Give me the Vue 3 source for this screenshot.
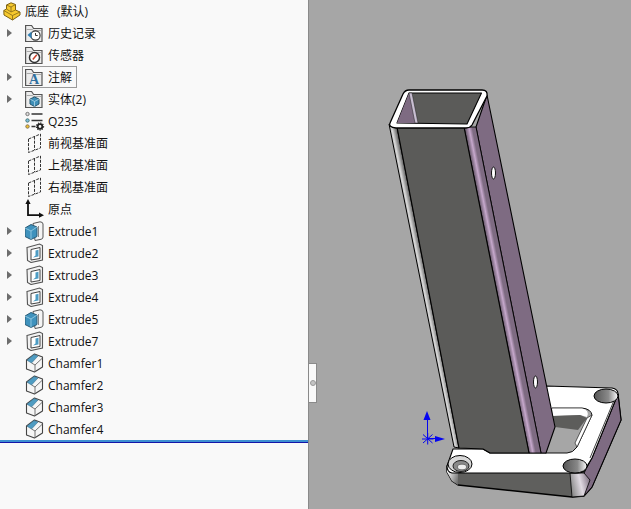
<script setup>
const rows = [
  { label: "历史记录", icon: "history", arrow: true },
  { label: "传感器", icon: "sensor" },
  { label: "注解", icon: "note", arrow: true, selected: true },
  { label: "实体(2)", icon: "solid", arrow: true },
  { label: "Q235", icon: "material" },
  { label: "前视基准面", icon: "plane" },
  { label: "上视基准面", icon: "plane" },
  { label: "右视基准面", icon: "plane" },
  { label: "原点", icon: "origin" },
  { label: "Extrude1", icon: "boss", arrow: true },
  { label: "Extrude2", icon: "cut", arrow: true },
  { label: "Extrude3", icon: "cut", arrow: true },
  { label: "Extrude4", icon: "cut", arrow: true },
  { label: "Extrude5", icon: "boss", arrow: true },
  { label: "Extrude7", icon: "cut", arrow: true },
  { label: "Chamfer1", icon: "chamfer" },
  { label: "Chamfer2", icon: "chamfer" },
  { label: "Chamfer3", icon: "chamfer" },
  { label: "Chamfer4", icon: "chamfer" },
];
const folders = ["history", "sensor", "note", "solid"];
</script>

<template>
  <div class="app">
    <aside class="tree">
      <div class="row root">
        <svg class="root-icon" width="18" height="19" viewBox="0 0 18 19">
          <path d="M.8 8.5 L3.5 7 V3 L8 .8 L12.5 2.5 V8 L17 10 V13 L9.5 18 L1 13Z" fill="#f6c92e" stroke="#7d6214" stroke-width="1" stroke-linejoin="round" />
          <path d="M3.5 3 L8 5 L12.5 2.5 M8 5 V10 L12.5 8 M8 10 L3.5 7 M.8 8.5 L9.5 13.5 L17 10 M9.5 13.5 V18" fill="none" stroke="#8f7118" stroke-width=".9" />
        </svg>
        <span class="label">底座</span>
        <span class="label config">(默认)</span>
      </div>

      <div v-for="row in rows" :key="row.label" class="row">
        <span class="arrow-cell"><i v-if="row.arrow" class="arrow"></i></span>
        <span class="item" :class="{ selected: row.selected }">
          <svg class="icon" width="20" height="20" viewBox="0 0 20 20">
            <g v-if="folders.includes(row.icon)">
              <path d="M.6 18.5 V2.5 H6.6 L8.6 5.5 H17 V18.5Z" fill="#ececec" stroke="#555" stroke-width="1.2" />
              <path d="M1.6 6.5 H7.6 L8.1 7.5 H16" fill="none" stroke="#aaa" />
            </g>
            <g v-if="row.icon === 'history'">
              <circle cx="10.5" cy="12.5" r="4.6" fill="#fff" stroke="#333" stroke-width="1.1" />
              <path d="M10.5 10 V12.5 H12.7" fill="none" stroke="#333" />
              <path d="M2.5 12 L6.5 8.5 V15.5Z" fill="#2f7fb5" />
            </g>
            <g v-if="row.icon === 'sensor'">
              <circle cx="9.5" cy="12.5" r="5" fill="#fff" stroke="#333" stroke-width="1.5" />
              <path d="M7.8 14.5 L11.8 9.8" stroke="#c8402a" stroke-width="1.5" />
            </g>
            <text v-if="row.icon === 'note'" x="9" y="17" class="note-a">A</text>
            <g v-if="row.icon === 'solid'">
              <path d="M9.5 8 L14 10 V15 L9.5 17.5 L5 15 V10Z" fill="#3f8fb8" stroke="#25566f" />
              <path d="M5 10 L9.5 12.5 L14 10 M9.5 12.5 V17.5" fill="none" stroke="#bfe0ee" stroke-width=".7" />
            </g>
            <g v-if="row.icon === 'material'">
              <circle cx="2.5" cy="3" r="1.7" fill="#ddd" stroke="#777" />
              <circle cx="2.5" cy="9.5" r="1.7" fill="#7fc0e0" stroke="#477" />
              <circle cx="2.5" cy="15.5" r="1.7" fill="#f0c030" stroke="#875" />
              <path d="M6.5 3 H17.5 M6.5 9.5 H17.5 M6.5 15.5 H10.5" stroke="#333" stroke-width="1.6" />
              <circle cx="15" cy="15.5" r="2.3" fill="none" stroke="#222" stroke-width="1.8" />
              <circle cx="15" cy="15.5" r="3.6" fill="none" stroke="#222" stroke-width="1.1" stroke-dasharray="1.2 1.2" />
            </g>
            <path v-if="row.icon === 'plane'" d="M3.5 6 L15.5 1 V15 L3.5 19.5Z M9.5 3.5 V17" fill="none" stroke="#333" stroke-dasharray="3 1.2" />
            <g v-if="row.icon === 'origin'">
              <path d="M3 3 V16.2 H15" fill="none" stroke="#111" stroke-width="1.8" />
              <path d="M3 0 L.4 5 H5.6Z M19 16.2 L14 13.6 V18.8Z" fill="#111" />
            </g>
            <g v-if="row.icon === 'boss'">
              <path d="M8 2.5 L15 .8 Q18 1 18 3 V16 Q18 18 16 18.3 L10 19.5Z" fill="#f4f4f4" stroke="#555" />
              <path d="M13.5 5 V16" stroke="#888" />
              <path d="M0 7 L6 3.5 L12 6 V15.5 L6 18.5 L0 15.5Z" fill="#3f92bd" stroke="#2a5a75" />
              <path d="M0 7 L6 10 L12 6 M6 10 V18.5" fill="none" stroke="#9fd0e6" stroke-width=".8" />
            </g>
            <g v-if="row.icon === 'cut'">
              <path d="M2 4.5 L14.5 1 L17.5 2.5 V17 L6 19.5 L2.5 17.5Z" fill="#f2f2f2" stroke="#555" stroke-width="1.1" />
              <path d="M6 6.5 L15 4.5 V15.5 L6 17Z" fill="#fff" stroke="#444" />
              <path d="M10.5 7.5 L13.5 6.8 V13.5 L8 14.5 L10.5 12.5Z" fill="#4c9cc4" />
            </g>
            <g v-if="row.icon === 'chamfer'">
              <path d="M1.5 7 L9.5 1 L17.5 4 V14 L9.5 19 L1.5 16Z" fill="#f6f6f6" stroke="#444" stroke-width="1.1" stroke-linejoin="round" />
              <path d="M2 7.2 L9 1.6 L13 3 L6.5 10Z" fill="#4f9cc2" stroke="#3b6f8c" stroke-width=".6" />
              <path d="M6.5 10 L10 12 L17.5 5 M10 12 V19" fill="none" stroke="#666" stroke-width=".9" />
            </g>
          </svg>
          <span class="label">{{ row.label }}</span>
        </span>
      </div>

      <div class="rollback"></div>
    </aside>

    <main class="viewport">
      <svg class="model" width="322" height="509" viewBox="309 0 322 509">
        <defs>
          <linearGradient id="bend" gradientUnits="userSpaceOnUse" x1="489" y1="250" x2="500.2" y2="247.8">
            <stop offset="0" stop-color="#6b5c6e" />
            <stop offset=".35" stop-color="#c6a8cc" />
            <stop offset=".62" stop-color="#7e6b82" />
            <stop offset="1" stop-color="#7e6b82" />
          </linearGradient>
          <linearGradient id="leftbend" gradientUnits="userSpaceOnUse" x1="437" y1="380" x2="447" y2="378">
            <stop offset="0" stop-color="#8c8c8c" />
            <stop offset=".5" stop-color="#d8d8d8" />
            <stop offset="1" stop-color="#555" />
          </linearGradient>
          <linearGradient id="hole" gradientUnits="userSpaceOnUse" x1="594" y1="396" x2="618" y2="396">
            <stop offset="0" stop-color="#555" />
            <stop offset=".6" stop-color="#8a8a8a" />
            <stop offset="1" stop-color="#fff" />
          </linearGradient>
          <linearGradient id="hole2" gradientUnits="userSpaceOnUse" x1="563" y1="466" x2="587" y2="466">
            <stop offset="0" stop-color="#555" />
            <stop offset=".6" stop-color="#888" />
            <stop offset="1" stop-color="#fff" />
          </linearGradient>
          <linearGradient id="corner" gradientUnits="userSpaceOnUse" x1="571" y1="485" x2="592" y2="480">
            <stop offset="0" stop-color="#8f8f8f" />
            <stop offset=".45" stop-color="#e0dae2" />
            <stop offset="1" stop-color="#6f5f72" />
          </linearGradient>
          <linearGradient id="cornerleft" gradientUnits="userSpaceOnUse" x1="447" y1="474" x2="459" y2="478">
            <stop offset="0" stop-color="#f4f4f4" />
            <stop offset="1" stop-color="#6e6e6e" />
          </linearGradient>
        </defs>

        <!-- base plate sides -->
        <path d="M447 466 L447 472 L452 481 L458 485 L572 497 L584 496 L592 487 L621 420 L618 394 Z" fill="#5f5f5d" stroke="#000" stroke-width="1.3" stroke-linejoin="round" />
        <path d="M618 394 L621 420 L592 487 L585 495 L584 473 L592 458Z" fill="#7e6b82" stroke="#000" />
        <path d="M570 473 L584 473 L590 480 L584 496 L572 497Z" fill="url(#corner)" stroke="#000" stroke-width=".8" />
        <path d="M447 466 L458 473 L458 485 L452 481 L447 472Z" fill="url(#cornerleft)" />

        <!-- base plate top -->
        <path d="M447 466 L453 449 L483 449 L490 453 L545 453 L546 386 L612 388 Q618 389 618 394 L592 458 L584 471 Q582 473 578 473 L458 473 L452 473 Q447 472 447 466Z" fill="#fff" stroke="#000" stroke-width="1.1" stroke-linejoin="round" />
        <path d="M615 398 L590 458" fill="none" stroke="#111" stroke-width=".8" />

        <!-- window through base -->
        <path d="M552 408 L582 408 Q591 409 592 415 L577 447 Q573 453 567 453 L545 453Z" fill="#a6a6a6" stroke="#111" />
        <path d="M552 408.5 L582 408.5 Q590 410 587 417 L580 415 L553 416Z" fill="#fff" />
        <path d="M553 416 L580 415 L587 418 L578 430 L555 427Z" fill="#5d5d5b" />
        <path d="M592 415 L577 447 L575 443 L587 418Z" fill="#fff" stroke="#222" stroke-width=".7" />

        <!-- holes -->
        <ellipse cx="606" cy="396" rx="12" ry="7" fill="url(#hole)" stroke="#000" />
        <ellipse cx="575" cy="466" rx="12" ry="7" fill="url(#hole2)" stroke="#000" />
        <ellipse cx="460" cy="464" rx="12" ry="8.5" fill="#d8d8d8" stroke="#000" />
        <ellipse cx="461" cy="466" rx="8" ry="5.5" fill="#8a8a8a" stroke="#222" />
        <ellipse cx="462" cy="467" rx="4.5" ry="2.8" fill="#eee" stroke="#444" stroke-width=".6" />

        <!-- tube -->
        <path d="M389 124 L397 127 L459 448 L454 447Z" fill="url(#leftbend)" stroke="#000" />
        <path d="M487 95 L555 427 L546 453 L541 453 L476 127Z" fill="#7e6b82" stroke="#000" stroke-width="1.1" stroke-linejoin="round" />
        <path d="M464 127 L476 127 L541 453 L529 453Z" fill="url(#bend)" stroke="#000" stroke-width=".9" />
        <path d="M397 127 L464 127 L529 453 L490 453 L483 449 L459 448Z" fill="#5b5b59" stroke="#000" stroke-width="1.1" stroke-linejoin="round" />

        <!-- tube opening -->
        <path d="M390 123 L403 94 Q405 90 409 90 L482 90 Q488 90 487 96 L472 125 Q470 128 466 128 L396 128 Q388 127 390 123Z" fill="#fff" stroke="#000" stroke-width="1.3" stroke-linejoin="round" />
        <path d="M397 123 L409 93 L481.5 93 L467 124Z" fill="#5b5b59" stroke="#000" stroke-width="1.1" stroke-linejoin="round" />
        <path d="M397 123 L409 93 L411 93 L418 123Z" fill="#7e6b82" />
        <path d="M409 93 L412 93 L418 123 L415 123Z" fill="#c9bfd2" stroke="#222" stroke-width=".5" />

        <!-- slots on the side wall -->
        <ellipse cx="493.5" cy="173" rx="2" ry="6" fill="#fff" stroke="#111" />
        <ellipse cx="535.5" cy="382" rx="2" ry="6" fill="#fff" stroke="#111" />

        <!-- triad -->
        <g fill="#0505f0" stroke="#0505f0">
          <path d="M427.5 418 V438.5 H437" fill="none" />
          <path d="M427 411 L430.5 420 H423.5Z" stroke="none" />
          <path d="M445 439 L435 436 V442Z" stroke="none" />
          <path d="M423 434.5 L432.5 443 M432.5 434.5 L423 443 M427.7 433 V444.5 M422 439 H433.5" stroke-width="1" />
        </g>
      </svg>
    </main>

    <div class="handle"><i class="dot"></i></div>
  </div>
</template>

<style scoped>
.app {
  position: relative;
  display: flex;
  width: 631px;
  height: 509px;
  overflow: hidden;
  background: #a6a6a6;
  font-family: "Open Sans", "Noto Sans CJK SC", sans-serif;
  font-size: 12px;
  color: #111;
}
.tree {
  width: 309px;
  flex-shrink: 0;
  box-sizing: border-box;
  background: #f9f9f9;
  border-right: 1px solid #8a8a8a;
}
.row {
  display: flex;
  align-items: center;
  height: 22px;
  padding-left: 7px;
}
.root {
  padding-left: 3px;
}
.root-icon {
  margin-right: 4px;
}
.config {
  margin-left: 8px;
}
.arrow-cell {
  display: flex;
  width: 15px;
  flex-shrink: 0;
}
.arrow {
  width: 0;
  height: 0;
  border-left: 5px solid #6d6d6d;
  border-top: 4px solid transparent;
  border-bottom: 4px solid transparent;
}
.item {
  display: flex;
  align-items: center;
  height: 22px;
  box-sizing: border-box;
  padding: 0 0 0 2px;
  border: 1px solid transparent;
}
.item.selected {
  border-color: #9a9a9a;
  padding-right: 4px;
}
.icon {
  margin-right: 3px;
  flex-shrink: 0;
}
.label {
  white-space: pre;
}
.note-a {
  font-family: "Liberation Serif", serif;
  font-size: 14px;
  font-weight: 700;
  fill: #2f6f9f;
  text-anchor: middle;
}
.rollback {
  height: 2px;
  background: #3d8fd1;
  border-bottom: 1px solid #1414a8;
}
.viewport {
  flex: 1;
}
.model {
  display: block;
}
.handle {
  position: absolute;
  left: 309px;
  top: 363px;
  display: flex;
  align-items: center;
  justify-content: center;
  width: 7px;
  height: 38px;
  background: #f9f9f9;
  border: 1px solid #8a8a8a;
  border-left: 0;
}
.dot {
  width: 4px;
  height: 4px;
  border-radius: 50%;
  background: #c4c4c4;
  border: 1px solid #999;
}
</style>
